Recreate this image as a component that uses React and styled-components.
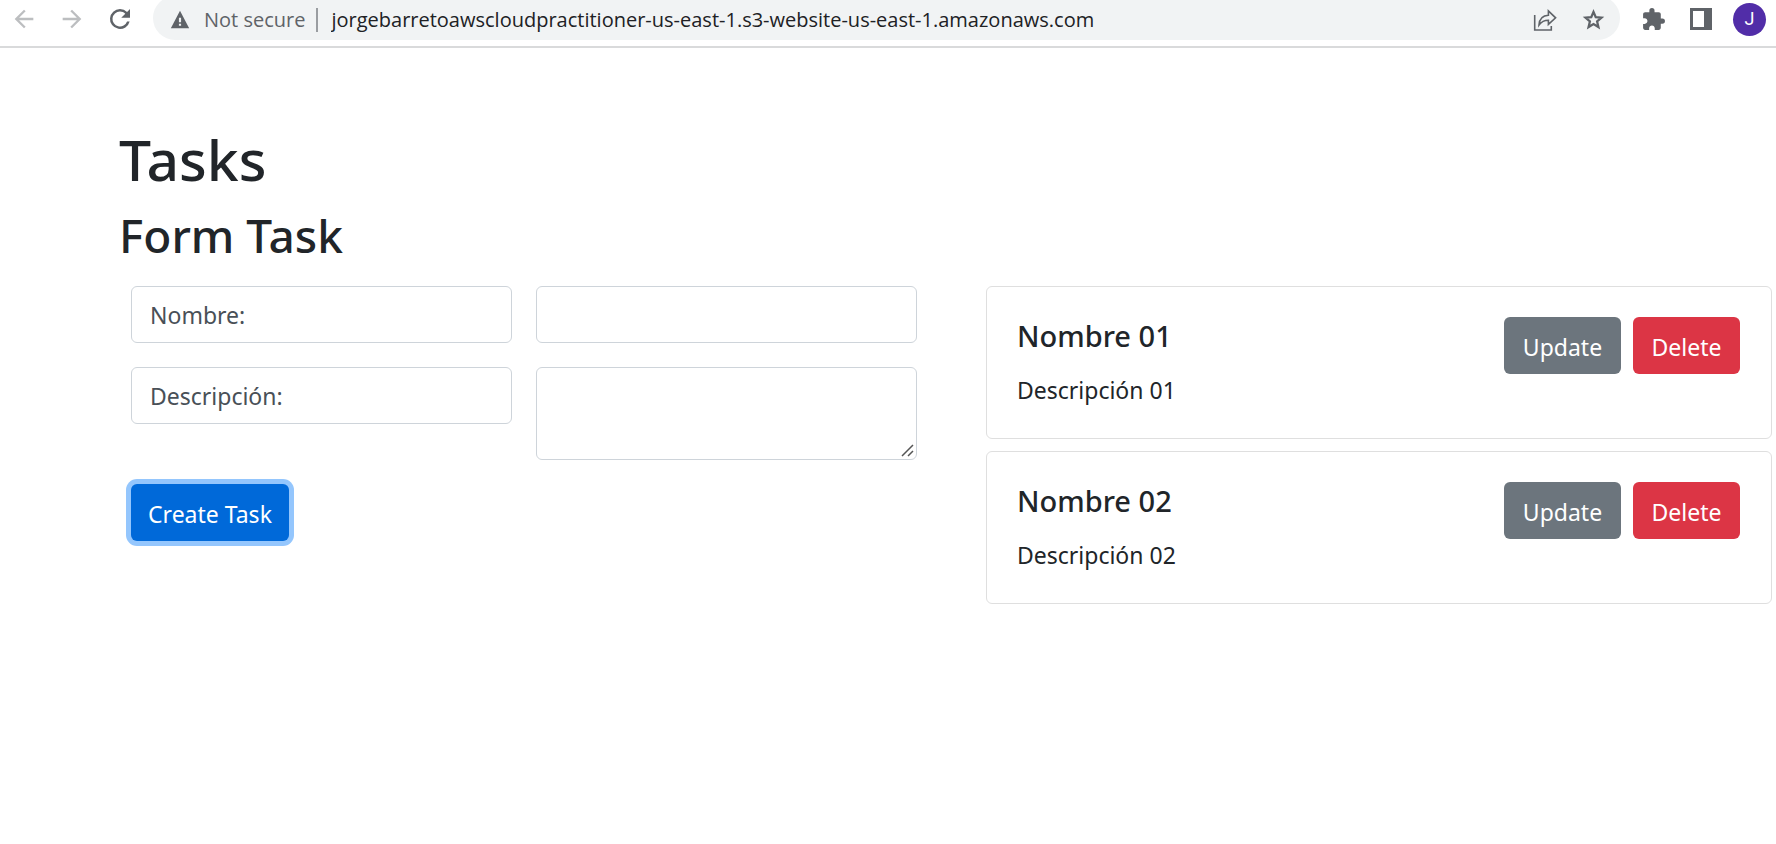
import React from "react";
import styled, { createGlobalStyle } from "styled-components";

const GlobalStyle = createGlobalStyle`
  *, *::before, *::after { box-sizing: border-box; }
  body {
    margin: 0;
    background: #fff;
    color: #212529;
    font-family: "Noto Sans", "Open Sans", sans-serif;
    font-size: 23px;
    line-height: 36px;
    font-kerning: normal;
    text-rendering: optimizeLegibility;
  }
  h1, h2, h3, p { margin: 0; }
  button, input, textarea { font: inherit; text-rendering: inherit; }
`;

const BrowserBar = styled.header`
  display: flex;
  align-items: flex-start;
  height: 48px;
  overflow: hidden;
  border-bottom: 2px solid #d9dadb;
  font-family: "Open Sans", "Noto Sans", sans-serif;
`;

const BarGroup = styled.div`
  display: flex;
  align-items: center;
  height: 38px;
  gap: ${(p) => p.$gap}px;
  padding: ${(p) => p.$pad};
`;

const IconButton = styled.button`
  display: flex;
  align-items: center;
  justify-content: center;
  flex: none;
  width: 32px;
  height: 32px;
  padding: 0;
  border: 0;
  background: none;
  color: ${(p) => (p.disabled ? "#bcbec0" : "#5f6368")};
`;

const Avatar = styled(IconButton)`
  width: 33px;
  height: 33px;
  border-radius: 50%;
  background: #512da8;
  color: #fff;
  font-family: Roboto, sans-serif;
  font-size: 18px;
  line-height: 20px;
`;

const Omnibox = styled.div`
  display: flex;
  align-items: center;
  flex: 1;
  min-width: 0;
  height: 44px;
  margin-top: -4px;
  padding: 3px 11px 0 17px;
  border-radius: 22px;
  background: #f1f3f4;
  font-size: 20px;
  line-height: 28px;
`;

const Security = styled.span`
  display: flex;
  align-items: center;
  flex: none;
  gap: 14px;
  padding-right: 11px;
  border-right: 2px solid #9a9da1;
  height: 24px;
  color: #5f6368;
`;

const Address = styled.input`
  flex: 1;
  min-width: 0;
  height: 32px;
  margin-left: 13px;
  padding: 0;
  border: 0;
  outline: 0;
  background: none;
  color: #202124;
`;

const OmniActions = styled.div`
  display: flex;
  gap: 16px;
`;

const Page = styled.main`
  padding: 75px 4px 24px 119px;
`;

const Title = styled.h1`
  font-size: 57px;
  font-weight: 500;
  line-height: 72px;
  margin-bottom: 12px;
`;

const Subtitle = styled.h2`
  font-size: 46px;
  font-weight: 500;
  line-height: 56px;
  margin-bottom: 23px;
`;

const Columns = styled.div`
  display: grid;
  grid-template-columns: repeat(2, minmax(0, 1fr));
  column-gap: 69px;
  align-items: start;
  padding-left: 12px;
`;

const Form = styled.form`
  display: grid;
  grid-template-columns: repeat(2, minmax(0, 1fr));
  gap: 24px;
  align-items: start;
`;

const FieldLabel = styled.label`
  height: 57px;
  padding: 10px 18px;
  border: 1px solid #ced4da;
  border-radius: 6px;
  color: #495057;
`;

const TextField = styled.input`
  width: 100%;
  height: 57px;
  padding: 10px 18px;
  border: 1px solid #ced4da;
  border-radius: 6px;
  background: #fff;
  color: #495057;
`;

const TextAreaFrame = styled.div`
  position: relative;
`;

const TextArea = styled.textarea`
  display: block;
  width: 100%;
  height: 93px;
  padding: 9px 18px;
  border: 1px solid #ced4da;
  border-radius: 6px;
  background: #fff;
  color: #495057;
  resize: vertical;

  &::-webkit-resizer { display: none; }
`;

const Grip = styled.svg`
  position: absolute;
  right: 3px;
  bottom: 3px;
  pointer-events: none;
`;

const tones = { primary: "#0069d9", secondary: "#6c757d", danger: "#dc3545" };

const Button = styled.button`
  height: 57px;
  padding: 2px 16px 0;
  border: 0;
  border-radius: 6px;
  background: ${(p) => tones[p.$tone]};
  color: #fff;
  white-space: nowrap;
  justify-self: start;
  min-width: ${(p) => p.$width}px;
  box-shadow: ${(p) => (p.$ring ? "0 0 0 5px #94c6fd" : "none")};
`;

const TaskList = styled.ul`
  display: grid;
  gap: 12px;
  margin: 0;
  padding: 0;
  list-style: none;
`;

const Card = styled.li`
  display: flex;
  justify-content: space-between;
  align-items: flex-start;
  padding: 30px 31px 30px 30px;
  border: 1px solid #dfdfdf;
  border-radius: 6px;
`;

const CardTitle = styled.h3`
  font-size: 29px;
  font-weight: 500;
  line-height: 37px;
  margin-bottom: 18px;
`;

const CardActions = styled.div`
  display: flex;
  gap: 12px;
`;

const Icon = ({ size, box = 24, children, ...rest }) => (
  <svg width={size} height={size} viewBox={`0 0 ${box} ${box}`} fill="currentColor" aria-hidden="true" {...rest}>
    {children}
  </svg>
);

const tasks = [
  { name: "Nombre 01", description: "Descripción 01" },
  { name: "Nombre 02", description: "Descripción 02" },
];

export default function App() {
  return (
    <>
      <GlobalStyle />
      <BrowserBar>
        <BarGroup $gap={16} $pad="0 17px 0 8px">
          <IconButton aria-label="Back" disabled>
            <Icon size={28}><path d="M20 11H7.830l5.590-5.590L12 4l-8 8 8 8 1.410-1.410L7.830 13H20z" /></Icon>
          </IconButton>
          <IconButton aria-label="Forward" disabled>
            <Icon size={28}><path d="M4 11h12.170l-5.590-5.590L12 4l8 8-8 8-1.410-1.410L16.170 13H4z" /></Icon>
          </IconButton>
          <IconButton aria-label="Reload">
            <Icon size={30}><path d="M17.650 6.350A7.960 7.960 0 0 0 12 4a8 8 0 1 0 7.730 10h-2.080A6 6 0 1 1 12 6c1.660 0 3.140.690 4.220 1.780L13 11h7V4z" /></Icon>
          </IconButton>
        </BarGroup>
        <Omnibox>
          <Security>
            <Icon size={20}><path d="M1 22h22L12 1zm12.300-3h-2.600v-2.600h2.600zm0-4.400h-2.600V9.300h2.600z" /></Icon>
            Not secure
          </Security>
          <Address
            aria-label="Address"
            defaultValue="jorgebarretoawscloudpractitioner-us-east-1.s3-website-us-east-1.amazonaws.com"
          />
          <OmniActions>
            <IconButton aria-label="Share">
              <Icon size={24} fill="none" stroke="currentColor" strokeWidth="1.6">
                <path d="M1.700 7v15h16.600v-4M6 17c.400-6 3.600-9.600 9.400-9.800V2.900l7.200 6.900-7.200 6.600v-4.200C11 12.200 8.400 13.700 6 17z" />
              </Icon>
            </IconButton>
            <IconButton aria-label="Bookmark">
              <Icon size={25} fill="none" stroke="currentColor" strokeWidth="2.2">
                <path d="M12 4.700l2.150 5.080 5.500.470-4.180 3.620 1.260 5.380L12 16.400l-4.730 2.850 1.260-5.380-4.180-3.620 5.500-.470z" />
              </Icon>
            </IconButton>
          </OmniActions>
        </Omnibox>
        <BarGroup $gap={16} $pad="0 10px 0 17px">
          <IconButton aria-label="Extensions">
            <Icon size={25}><path d="M20.500 11H19V7c0-1.100-.900-2-2-2h-4V3.500a2.500 2.500 0 0 0-5 0V5H4c-1.100 0-1.990.900-1.990 2v3.800H3.500c1.490 0 2.700 1.210 2.700 2.700s-1.210 2.700-2.700 2.700H2V20c0 1.100.900 2 2 2h3.800v-1.500c0-1.490 1.210-2.700 2.700-2.700s2.700 1.210 2.700 2.700V22H17c1.100 0 2-.900 2-2v-4h1.500a2.500 2.500 0 0 0 0-5z" /></Icon>
          </IconButton>
          <IconButton aria-label="Side panel">
            <Icon size={22} box={22}><path fillRule="evenodd" d="M0 0h22v22H0zM3 3v16h11V3z" /></Icon>
          </IconButton>
          <Avatar aria-label="Profile">J</Avatar>
        </BarGroup>
      </BrowserBar>
      <Page>
        <Title>Tasks</Title>
        <Subtitle>Form Task</Subtitle>
        <Columns>
          <Form onSubmit={(e) => e.preventDefault()}>
            <FieldLabel htmlFor="name">Nombre:</FieldLabel>
            <TextField id="name" type="text" />
            <FieldLabel htmlFor="description">Descripción:</FieldLabel>
            <TextAreaFrame>
              <TextArea id="description" />
              <Grip width="13" height="13" viewBox="0 0 13 13" stroke="#555" strokeWidth="1.5" aria-hidden="true">
                <path d="M1 12L12 1M7 12l5-5" />
              </Grip>
            </TextAreaFrame>
            <Button type="submit" $tone="primary" $width={158} $ring>Create Task</Button>
          </Form>
          <TaskList>
            {tasks.map((task) => (
              <Card key={task.name}>
                <div>
                  <CardTitle>{task.name}</CardTitle>
                  <p>{task.description}</p>
                </div>
                <CardActions>
                  <Button type="button" $tone="secondary" $width={117}>Update</Button>
                  <Button type="button" $tone="danger" $width={107}>Delete</Button>
                </CardActions>
              </Card>
            ))}
          </TaskList>
        </Columns>
      </Page>
    </>
  );
}
